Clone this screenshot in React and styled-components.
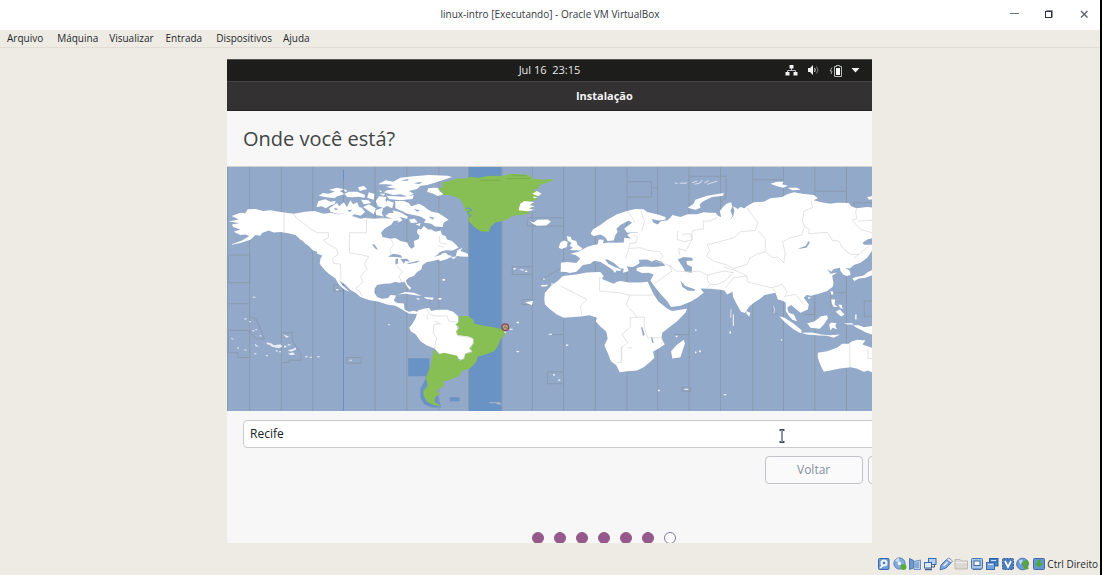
import React from "react";
import styled, { createGlobalStyle } from "styled-components";

const GlobalStyle = createGlobalStyle`
  *, *::before, *::after { box-sizing: border-box; }
  body { margin: 0; background: #eeebe5; }
  button, input { font: inherit; margin: 0; }
`;

const uiFont = `"Open Sans", "Noto Sans", sans-serif`;

/* ---------- host window ---------- */

const HostWindow = styled.div`
  min-height: 100vh;
  display: flex;
  flex-direction: column;
  background: #eeebe5;
  border-right: 2px solid #000;
  font-family: ${uiFont};
  font-size: 10px;
  color: #25282c;
`;

const TitleBar = styled.header`
  display: grid;
  grid-template-columns: 1fr auto 1fr;
  align-items: center;
  height: 30px;
  padding-bottom: 2px;
  background: #fff;
`;

const WindowTitle = styled.h1`
  grid-column: 2;
  margin: 0;
  font-size: 10px;
  font-weight: 400;
  line-height: 14px;
  color: #33373d;
`;

const WindowControls = styled.div`
  display: flex;
  justify-content: flex-end;
  gap: 15px;
  padding-right: 6px;
`;

const ControlButton = styled.button`
  display: grid;
  place-items: center;
  width: 20px;
  height: 20px;
  padding: 0;
  border: 0;
  background: none;
`;

const MenuBar = styled.nav`
  display: flex;
  align-items: center;
  height: 18px;
  padding: 0 7px 1px;
  border-bottom: 1px solid #e3ddd6;
`;

const MenuItem = styled.button`
  padding: 0;
  margin-right: ${(p) => p.$gap}px;
  border: 0;
  background: none;
  color: inherit;
  line-height: 14px;
`;

const Workspace = styled.main`
  flex: 1;
  display: grid;
  grid-template-columns: 227fr 645fr 228fr;
  padding-top: 11px;
`;

const StatusBar = styled.footer`
  display: flex;
  justify-content: flex-end;
  align-items: center;
  gap: 1px;
  height: 32px;
  padding: 10px 2px 0 0;
  line-height: 14px;
`;

const StatusIcons = styled.div`
  display: grid;
  grid-template-columns: repeat(11, 1fr);
  justify-items: center;
  width: 170px;
`;

/* ---------- guest display ---------- */

const GuestDisplay = styled.section`
  grid-column: 2;
  min-width: 0;
  height: 484px;
  overflow: hidden;
  background: #f7f7f7;
  color: #e8e8e8;
`;

const TopBar = styled.div`
  display: grid;
  grid-template-columns: 1fr auto 1fr;
  align-items: center;
  height: 22px;
  padding: 0 12px 1px 0;
  background: #1d1d1c;
  border-top: 1px solid #55534f;
`;

const Clock = styled.time`
  grid-column: 2;
  padding-left: 12px;
  font-size: 11px;
  line-height: 16px;
  white-space: pre;
`;

const Indicators = styled.div`
  display: flex;
  align-items: center;
  justify-content: flex-end;
  gap: 9px;
`;

const Installer = styled.div`
  width: 117%;
  color: #3d3d3d;
`;

const InstallerTitle = styled.div`
  height: 30px;
  border-top: 1px solid #454343;
  border-bottom: 1px solid #232222;
  background: #333131;
  color: #f4f4f4;
  font-size: 11px;
  font-weight: 700;
  line-height: 28px;
  text-align: center;
`;

const Heading = styled.h2`
  height: 56px;
  margin: 0;
  padding: 0 16px;
  border-bottom: 1px solid #d0d0cf;
  font-size: 20px;
  font-weight: 400;
  line-height: 55px;
  color: #434545;
`;

const MapFrame = styled.div`
  height: 244px;
  overflow: hidden;
  svg { display: block; width: 100%; height: 100%; }
`;

const Form = styled.form`
  padding: 9px 16px 0;
`;

const CityInput = styled.input`
  display: block;
  width: 100%;
  height: 28px;
  padding: 0 6px 2px;
  border: 1px solid #cbcbcd;
  border-radius: 4px;
  background: #fff;
  color: #202224;
  font-size: 12px;
  outline: none;
`;

const Actions = styled.div`
  display: flex;
  justify-content: flex-end;
  gap: 5px;
  padding-top: 8px;
`;

const ActionButton = styled.button`
  width: 98px;
  height: 28px;
  padding: 0 0 2px;
  border: 1px solid #c3c4c9;
  border-radius: 4px;
  background: #fafafa;
  color: #8590a0;
  font-size: 12px;
`;

const Progress = styled.div`
  display: flex;
  justify-content: center;
  gap: 10px;
  padding-top: 48px;
`;

const Dot = styled.span`
  width: 12px;
  height: 12px;
  border: 1px solid ${(p) => (p.$done ? "#955a8b" : "#847696")};
  border-radius: 50%;
  background: ${(p) => (p.$done ? "#955a8b" : "#fff")};
`;

const PointerLayer = styled.div`
  position: relative;
  svg { position: absolute; right: 180px; top: 9px; }
`;

/* ---------- map ---------- */

const zoneLines = [2, 68, 163, 257, 444, 539, 635, 724, 824, 915, 1009, 1104, 1199, 1291, 1385, 1479, 1576, 1668, 1762, 1857];

const WorldMap = () => (
  <svg viewBox="0 18 2262 733" preserveAspectRatio="xMinYMin slice" role="img" aria-label="Mapa de fusos horários">
    <rect y="0" width="2262" height="760" fill="#93a9c9" />
    <g fill="#6992c5">
      <path d="M724 18H824V752H724Z" />
      <path d="M543 591H607V645H543ZM668 708H697V720H668Z" />
      <path d="M605 620L590 665L580 680L579 710L592 730L615 739H642L630 690Z" />
    </g>
    <g fill="none" stroke="#8b9bae" strokeWidth="3">
      {zoneLines.map((x) => <path key={x} d={`M${x} 18V752`} />)}
      <path d="M4 282H68V365H4ZM4 428H68V465L88 475L112 533H88L62 507H4V575H32V589H68M166 515H196V540L222 578V597H186V604H163M358 589H402V606H358ZM320 372H345V390H320Z" />
      <path d="M855 317H915M855 317V340H915M885 415H915M885 415V430H915M960 632H1009M960 632V668H1009M900 175V195H1009V170H900M940 357L1005 318M962 520H1009" />
      <path d="M1199 62H1272V108H1199M1291 80H1275M1385 46H1496V108L1479 125M1576 56H1668M1762 91H1857M1880 137V125H1935M1340 520H1385M1363 680H1390V690H1363ZM1636 435V458H1650M1762 425V460H1725M1857 395H1810V440M1935 420H1910V465H1935" />
    </g>
    <path d="M349 27V752" stroke="#4d83c5" strokeWidth="2" />
    <path d="M349 58V340" stroke="#8b9bae" strokeWidth="3" />

    {/* North America */}
    <g fill="#fff">
      <path d="M14 165L40 155L55 157L62 145L85 144L108 150L130 148L165 154L200 158L235 152L262 150L290 158L312 155L330 160L350 158L385 168L400 173L418 170L440 174L465 170L490 173L500 165L508 172L518 168L526 178L512 184L505 192L490 192L472 203L462 214L466 228L490 233L505 231L520 240L540 244L546 257L553 263L562 257L560 240L575 234L577 224L569 214L572 204L582 205L590 195L603 205L612 205L625 212L640 208L645 222L655 225L660 235L674 240L686 250L694 260L676 268L655 268L636 274L648 277L655 272L662 282L676 285L660 294L640 300L632 295L618 300L600 303L586 312L582 325L570 333L560 345L545 350L536 358L541 370L552 381L548 386L540 377L532 362L515 365L505 362L490 367L470 368L450 372L443 382L442 395L450 408L465 413L483 411L490 402L507 403L500 418L510 426L530 427L532 445L545 452L560 449L580 455L565 459L545 457L525 445L505 434L480 430L455 422L425 417L400 408L385 395L370 387L355 371L342 362L336 358L345 372L360 385L367 393L350 384L335 370L325 352L305 338L290 324L278 308L280 293L287 281L270 272L258 268L245 255L232 244L222 236L205 222L180 216L160 213L140 214L125 208L105 216L100 224L85 222L70 236L40 246L8 252L45 238L67 225L55 220L40 222L20 212L40 205L18 198L15 190L38 186L5 181L35 175Z" />
      <path d="M225 232L238 240L248 255L235 248ZM270 270L288 276L286 284L270 277ZM208 220L220 226L222 238Z" />
      <path d="M268 138L274 120L295 115L310 122L326 120L322 130L312 132L296 142L284 136ZM275 104L288 96L302 98L312 96L330 88L345 94L352 100L330 106L322 112L310 110L293 108ZM306 86L330 80L350 85L335 92L318 90ZM350 84L362 90L354 93ZM352 98L366 92L390 92L414 102L412 110L394 107L378 109L360 108ZM392 79L410 75L420 84L398 90ZM306 142L330 126L336 136L350 124L360 138L370 118L378 130L390 124L396 138L404 140L414 153L400 164L382 160L370 168L350 158L330 158L310 152Z" />
      <path d="M425 94L442 99L440 116L420 110ZM402 116L424 118L432 126L410 130ZM408 138L425 130L446 142L440 160L425 150ZM445 148L468 140L464 158L470 166L447 162ZM446 121L455 106L478 108L474 118L486 130L470 141L452 136Z" />
      <path d="M453 70L475 58L498 62L520 50L560 46L605 42L660 44L675 48L650 56L620 66L600 72L580 74L570 84L545 90L560 98L540 106L520 100L498 102L470 94L480 88L510 84L476 78L500 72L478 70ZM455 88L465 90L460 94ZM478 104L530 107L560 102L556 114L520 118L486 114ZM456 98L474 98L470 104Z" />
      <path d="M480 118L500 125L495 142L478 134ZM504 120L530 120L545 126L552 136L575 128L590 136L600 144L614 152L634 156L650 166L664 176L650 184L646 198L624 196L612 188L590 184L596 176L580 166L560 162L540 158L524 150L505 142ZM474 165L486 156L500 155L496 148L520 154L542 166L540 174L518 168L500 176ZM545 176L562 172L572 184L552 186ZM566 190L580 186L578 195Z" />
      <path d="M603 82L622 80L640 82L636 90L650 100L632 105L618 98L600 92Z" />
      <path d="M690 268L705 260L700 270L722 278L723 287L700 286L686 284ZM670 290L690 285L680 294ZM512 400L535 393L560 395L585 405L560 402L535 398ZM590 408L620 410L616 416L598 414ZM567 411L580 413L572 416ZM634 411L644 411L642 415H634ZM648 354H653V358H648Z" />
    </g>
    <g fill="#93a9c9">
      <path d="M482 287L498 278L520 282L526 290L508 288ZM505 294L513 292L512 308L505 310ZM520 294L540 293L548 302L535 300L530 308ZM538 307L560 302L578 298L570 304L545 309ZM434 250L442 250L453 266L446 264ZM490 195L500 180L515 178L508 190ZM636 274L655 268L672 270L660 276L648 274L640 282L620 288L632 280Z" />
      <path d="M520 58L546 54L540 60ZM560 66L586 62L576 70ZM604 166L622 170L616 175ZM560 144L578 148L570 152ZM320 140L334 144L326 148ZM360 148L376 146L368 153Z" />
    </g>
    <path d="M171 153V214M200 158L208 172L225 183L245 200L270 215H304V230L288 237L302 248L328 263L333 280L316 293L320 307L340 309L342 358M418 172V215H367V276L400 280L425 287L412 308L420 324L400 345L408 362L385 382L398 392L405 406M418 172H495M490 233L500 250L488 265L492 282M508 312L526 333L515 345L524 362M636 225L638 245L660 250M632 254L650 258" fill="none" stroke="#d5d5d7" strokeWidth="2" />

    {/* Pacific islands */}
    <g fill="#e9edf4">
      <path d="M78 407H85V410H78ZM52 471H58V475H52ZM66 480H72V483H66ZM76 507H82V510H76ZM85 504H90V507H85ZM98 522H103V526H98ZM12 529L22 536L14 534ZM30 559H36V562H30ZM52 565H58V568H52ZM83 548L95 556L86 556ZM81 576H88V579H81ZM116 582H123V585H116ZM168 519L186 527L178 530ZM119 543L134 547L140 552L160 549L166 556L156 561L134 557L128 551L119 549ZM171 554H178V559H171ZM182 549H190V553H182ZM181 567L195 564L207 559V565L192 572ZM182 578L198 573L204 580L192 582ZM146 567H152V571H146ZM156 570H162V573H156ZM234 585H242V588H234ZM248 587H255V590H248ZM270 585H278V588H270ZM367 596H374V599H367ZM327 384H334V388H327ZM483 489H489V492H483Z" />
    </g>

    {/* South America */}
    <path d="M572 448L590 443L606 440L612 450L630 446L660 446L678 452L694 466L693 482L690 500L740 535L739 570L710 598L690 592L640 582L622 562L598 552L580 540L566 520L551 510L546 500L556 488L566 470Z" fill="#fff" />
    <path d="M693 466L723 464L740 478V487L770 494L800 498L824 504L836 516L820 535L812 555L800 570L775 580L752 586L746 604L728 622L704 630L695 645L668 656L648 662L650 674L626 690L640 696L624 708L622 722L640 734L622 733L600 722L590 705L588 690L602 672L596 650L610 615L616 582L622 562L632 580L650 575L690 584L696 598L710 592L714 577L735 570L726 562L738 546V532L720 525L690 522L686 510L696 498L685 490L697 480Z" fill="#87bf55" />
    <path d="M598 443L606 460L630 465L660 464L665 480L690 483M600 460V475M622 480L640 488L620 490L618 515L628 530L624 550L622 562M684 490L695 498L688 512L692 524L728 528L738 532V548L728 563L735 572L714 578L710 593L697 598" fill="none" stroke="#d5d5d7" strokeWidth="2" />
    <path d="M786 723H818L824 730H810L806 726H786Z" fill="#a9b6ca" />
    <path d="M608 413V436L630 443" fill="none" stroke="#8b9bae" strokeWidth="2" />

    {/* Greenland and the Atlantic */}
    <g transform="translate(519 0)">
      <path d="M112 84L130 74L122 65L150 60L165 53L195 52L210 48L238 50L262 45L310 44L330 38L382 41L402 54L432 56L458 53L456 60L434 67L420 70L416 80L400 88L414 96L410 116L388 122L396 140L384 150L386 158L358 162L336 165L325 173L300 181L284 185L272 196L266 212L242 211L220 196L205 178L202 160L194 148L190 132L180 115L166 108L148 102L130 102L124 90Z" fill="#87bf55" />
      <path d="M196 142L208 142L214 148L202 152L204 160L212 163L206 168" fill="none" stroke="#6992c5" strokeWidth="3" />
      <path d="M240 58H300M320 53L390 52M335 42L380 44" stroke="#79ad4e" strokeWidth="3" />
      <g fill="#fff">
        <path d="M355 148L360 128L372 120L402 123L388 132L404 136L386 142L402 147L382 151ZM396 98L410 90L424 98L414 105L404 102ZM400 106L412 110L400 112ZM388 180L400 184L412 176L442 175L452 182L438 193L410 194L398 188Z" />
        <path d="M500 225L512 228L514 236L528 240L532 252L547 262L540 268L508 267L518 260L508 254L514 246L502 238ZM475 260L480 245L490 238L502 242L500 258L484 264Z" />
        <path d="M376 423L398 420L395 432L382 428ZM422 372L444 371L438 376H424ZM340 321H346V325H340ZM356 324L372 326L368 329ZM374 329H381V333H374ZM428 352H434V355H428ZM349 482H356V486H349ZM328 503H337V506H328ZM347 569L358 570L352 574ZM497 550H504V554H497ZM445 518H455V521H445ZM458 639H464V643H458ZM474 655H480V659H474ZM452 367H460V370H452ZM127 354H134V358H127Z" />
      </g>
      <circle cx="315" cy="498" r="10" fill="#c8a090" stroke="#8c4659" strokeWidth="4" />
      <path d="M315 490V498M308 503Q315 495 322 503" fill="none" stroke="#6e8a3e" strokeWidth="3" />
      <path d="M310 511L315 518L320 511Z" fill="#e9ded7" />
    </g>

    {/* Europe, Africa, Asia and Oceania */}
    <g transform="translate(1119 0)">
      <g fill="#fff">
        <path d="M-28 216L-22 205L0 192L20 177L50 160L80 150L105 144L130 145L140 153L170 160L195 168L196 175L175 178L155 174L158 184L172 190L182 180L200 178L210 170L216 162L240 168L262 160L290 160L310 154L325 155L345 155L354 165L362 168L358 150L368 138L378 128L392 124L396 138L390 148L396 165L388 176L398 166L402 150L398 136L412 144L420 138L432 142L440 135L460 124L490 122L510 112L545 108L560 100L580 94L605 98L640 102L652 112L640 118L662 124L690 128L710 125L745 126L752 136L768 142L800 138L820 140V232L800 242L790 250L815 250L814 270L800 290L780 305L760 312L748 322L735 320L748 330L750 342L738 345L728 340L720 330L718 320L700 324L692 332L680 324L690 338L710 334L695 344L699 368L696 378L680 390L655 398L632 404L618 402L610 410L625 430L622 445L600 455L588 445L572 432L560 440L565 455L580 460L590 480L576 476L565 464L556 450L556 425L545 418L532 415L525 395L510 398L492 402L480 412L460 425L445 438L434 456L422 452L410 432L398 408L396 392L380 400L372 388L360 386L330 383L300 382L310 395L290 410L270 422L240 434L212 438L200 420L180 398L158 370L150 358L160 340L145 335L125 336L108 328L110 320L130 316L160 318L195 314L185 302L165 296L155 302L140 295L115 296L118 306L105 315L98 318L80 316L85 330L68 335L70 322L60 322L40 305L22 295L14 295L24 308L40 316L62 325L60 330L48 328L44 336L36 325L20 315L0 302L-20 300L-30 308L-52 312L-72 332L-92 336L-102 333L-119 332L-118 305L-100 303L-72 306L-60 292L-74 282L-90 278L-65 272L-40 258L-20 252L0 248L25 244L48 245L70 244L72 230L92 232L80 222L90 216L110 214L124 208L122 212L80 215L72 202L95 185L85 178L60 192L48 204L52 212L45 222L40 238L22 240L14 228L0 220L-18 225L-26 222Z" />
        <path d="M-8 252L-5 235L10 236L8 250Z" />
        <path d="M-112 345L-72 340L-40 334L0 333L10 345L5 354L40 368L50 362L62 360L85 364L120 364L142 362L160 400L175 422L200 442L215 450L260 443L255 455L230 480L205 500L186 515L183 530L193 550L178 560L158 572L162 590L150 602L130 618L110 628L80 630L58 633L48 612L32 600L22 575L12 553L22 532L18 512L0 496L-14 480L-10 470L-32 462L-60 466L-90 468L-110 470L-130 460L-150 445L-166 430L-168 412L-166 395L-148 375L-128 360Z" />
        <path d="M250 536L254 546L240 588L216 592L212 570L228 552ZM438 450L450 456L446 466L438 458Z" />
        <path d="M262 140L280 128L285 116L320 104L370 96L368 104L335 108L310 120L298 130L300 140L285 146ZM510 68L530 62L550 62L545 70L562 74L548 80L530 76ZM562 80L590 80L600 86L575 88ZM800 108L820 105V114L805 116Z" />
        <path d="M536 465L552 470L580 488L604 508L600 516L580 505L555 485ZM600 515L635 514L662 520L690 522L718 520L700 530L680 524L660 523L620 520ZM620 486L640 482L662 465L680 462L682 472L670 490L658 503L630 500ZM686 490L692 484L708 486L704 494L710 504L696 500L690 508ZM692 415L704 415L702 430L712 438L700 438L694 428ZM705 452L718 445L732 460L722 466ZM714 430L724 432L726 444L718 440ZM690 390L698 392L698 400L692 400ZM622 408L632 410L624 414ZM755 352L766 348L788 344L800 334L816 326V342L795 350L775 352L762 360ZM730 486H755L760 490H740ZM758 492L775 492L790 498L820 494V522L798 515L785 508L768 500ZM764 460H768V475H764Z" />
        <path d="M652 575L680 570L712 558L725 548L745 548L752 542L770 536L795 538L785 550L820 562V636L802 628L790 632L768 622L750 618L718 622L700 626L670 632L660 612L652 590Z" />
        <path d="M391 442L393 446L392 470H390ZM397 460H400V494H397ZM387 511H392V517H387ZM284 505H288V509H284ZM284 571H288V576H284ZM296 568H301V573H296ZM226 524H231V528H226ZM252 683H264V686H252ZM370 699H378V702H370ZM173 686H178V690H173ZM541 534H545V538H541Z" />
      </g>
      <path d="M223 65L232 68M238 67L255 66M260 63L254 69M275 65L290 60M282 70L298 66L306 58M312 66L325 59M320 70L334 65L350 61M519 436L522 445L520 458" fill="none" stroke="#d3dbe8" strokeWidth="3" />
      <g fill="#93a9c9">
        <path d="M232 295L250 288L275 290L278 298L258 300L260 310L275 318L274 335L255 332L246 316ZM240 358L255 375L285 385L280 390L262 388L246 378ZM600 260L615 255L625 240L628 245L618 260L592 264ZM122 498H126L133 520L128 525ZM152 528H156L160 545H155ZM786 245L800 235L820 230V250H790Z" />
      </g>
      <path d="M80 150L95 168L104 185M122 150L132 182L125 210M100 222L112 230L106 245L88 248L84 270L75 292M88 262L120 260L140 268L178 272L188 285L180 295M232 210L230 235L252 242L275 236L270 218L245 220M275 236L256 270L235 262L238 282M275 210L310 202L308 180L330 180L352 168M275 236V210M320 250L335 248L400 230L420 212L465 208L472 185L455 162L440 140M320 250L328 268L318 285L340 300L380 312L400 322L412 318L440 310L448 292L468 280L494 272L495 235L475 210M494 272L518 290L532 288L550 305L554 275L546 242L570 230L604 222L612 195L606 180L610 150L636 140L632 120M612 195L626 205L625 218L680 214L696 238L715 240L728 262L750 280L775 280L810 250M775 280L760 292M755 178L770 172L765 155L768 142M772 180L815 178M755 178L780 205L815 215M165 300L205 312L228 330L270 332L295 330L322 342L320 355L330 372L318 382M205 312L215 330L185 350L160 370M322 342L370 330L400 335L372 360L350 370L330 370M370 318L410 330L440 345L400 350L375 380M440 345V362L490 375L515 380M515 380L545 370L560 392L550 412M515 380L528 395M555 405L585 400L610 430M0 390L60 395L88 402H160M88 402L78 430L110 468L90 470V498L65 520L82 545L62 560L65 600M110 468H132V500L142 530H185V550M82 560H95M65 558L62 605M50 604H64M-118 375L-40 415L-60 435L-55 462M-2 348V390M748 548V618M802 562V592H820" fill="none" stroke="#d5d5d7" strokeWidth="2" />
    </g>
  </svg>
);

/* ---------- status icons ---------- */

const Icon = ({ size = 14, width, children, label }) => (
  <svg width={width || size} height={size} viewBox={`0 0 ${width || size} ${size}`} role="img" aria-label={label} fill="none">
    {children}
  </svg>
);

const DiskIcon = () => (
  <Icon label="Discos">
    <rect x="1.5" y="1.5" width="10.5" height="11" rx="1" fill="#6d9bd6" stroke="#3c69a6" />
    <circle cx="7" cy="6" r="3.600" fill="#e6effa" />
    <circle cx="7" cy="6" r="1.300" fill="#4c7dbd" />
    <path d="M3 11L6.500 8" stroke="#fff" strokeWidth="1.600" />
  </Icon>
);
const OpticalIcon = () => (
  <Icon label="Disco óptico">
    <circle cx="6.500" cy="6.500" r="5.600" fill="#83abdc" stroke="#5780b7" />
    <path d="M6.500 6.500L2 3.500A5.500 5.500 0 0 1 6 1Z" fill="#c9dcf1" />
    <circle cx="6.500" cy="6.500" r="1.700" fill="#eef4fb" />
    <circle cx="10.500" cy="10" r="3" fill="#58ad38" />
  </Icon>
);
const AudioIcon = () => (
  <Icon label="Áudio">
    <path d="M1.500 1.500L5.500 3.500V11L1.500 12.500Z" fill="#6c99d2" stroke="#5079b1" />
    <path d="M6 4.500L12.500 3V12.500H6Z" fill="#b9cfeb" stroke="#6b8fc0" />
    <path d="M8 5.500V11M10 5V11" stroke="#5d86bd" />
  </Icon>
);
const NetworkIcon = () => (
  <Icon label="Rede">
    <rect x="5.500" y="1.500" width="7.500" height="6" fill="#b5cfee" stroke="#3e6caa" />
    <path d="M11.500 7.500V10H8" stroke="#44536a" />
    <rect x="1.500" y="5.500" width="7" height="5.500" fill="#dce9f8" stroke="#3e6caa" />
    <path d="M2 12.500H9" stroke="#465f86" strokeWidth="1.500" />
  </Icon>
);
const UsbIcon = () => (
  <Icon label="USB">
    <path d="M1 13L2 8L7.500 2.500L12 6L7 11Z" fill="#7ba6df" stroke="#4777b5" />
    <path d="M7.500 2.500L10 1L13.500 4L12 6Z" fill="#e7eef6" stroke="#7590b4" />
    <path d="M4.500 9L8.500 5" stroke="#e9f2fd" strokeWidth="1.500" />
  </Icon>
);
const FolderIcon = () => (
  <Icon label="Pastas compartilhadas">
    <path d="M1 2.500H6L7.500 4H13.500V12H1Z" fill="#dcd9d5" stroke="#bcb9b5" />
    <path d="M1.500 5.500H13" stroke="#f2f0ed" />
  </Icon>
);
const DisplayIcon = () => (
  <Icon label="Monitor">
    <rect x="1.500" y="1.500" width="11" height="10.500" rx="1" fill="#a9c5e8" stroke="#4b78b4" />
    <rect x="4" y="4" width="6" height="4.500" fill="#f1f7fd" stroke="#41699e" />
    <path d="M3 12.500H11" stroke="#50739f" />
  </Icon>
);
const RecordIcon = () => (
  <Icon label="Gravação">
    <rect x="4.500" y="1.500" width="8.500" height="7.500" fill="#457bc0" stroke="#2f619f" />
    <rect x="1.500" y="5.500" width="8" height="7" fill="#77a5de" stroke="#3b6ba9" />
    <path d="M3 7.500H8M6 3.500H11" stroke="#d3e4f8" />
  </Icon>
);
const CpuIcon = () => (
  <Icon label="Processador">
    <rect x="1.500" y="1.500" width="11" height="11" rx="1" fill="#4a7cbd" stroke="#2f5d9a" strokeDasharray="2 1" />
    <path d="M4 4L7 10L10 4" stroke="#fff" strokeWidth="1.700" />
  </Icon>
);
const MouseIcon = () => (
  <Icon label="Integração do mouse">
    <circle cx="6.500" cy="7" r="5.800" fill="#6e9bd3" stroke="#4773ac" />
    <path d="M3 3.500L6 2.500L7 5L4 7.500Z" fill="#c0d8f2" />
    <path d="M6 5.500L11 3L13 6.500L10.500 8L12.500 11.500L9.500 12.500L7.500 9.500Z" fill="#58a73b" stroke="#4c9636" strokeWidth="0.500" />
  </Icon>
);
const KeyboardIcon = () => (
  <Icon label="Teclado">
    <rect x="1.500" y="1.500" width="11" height="11" rx="1" fill="#6995cf" stroke="#3e6ba6" />
    <path d="M5.500 3H8.500V6.500H11L7 10.500L3 6.500H5.500Z" fill="#4da92e" />
  </Icon>
);

const statusIcons = [DiskIcon, OpticalIcon, AudioIcon, NetworkIcon, UsbIcon, FolderIcon, DisplayIcon, RecordIcon, CpuIcon, MouseIcon, KeyboardIcon];

const menu = [
  ["Arquivo", 14],
  ["Máquina", 11],
  ["Visualizar", 12],
  ["Entrada", 14],
  ["Dispositivos", 11],
  ["Ajuda", 0],
];

export default function App() {
  return (
    <HostWindow>
      <GlobalStyle />
      <TitleBar>
        <WindowTitle>linux-intro [Executando] - Oracle VM VirtualBox</WindowTitle>
        <WindowControls>
          <ControlButton aria-label="Minimizar">
            <Icon size={10}><path d="M1 4.500H10" stroke="#6c7480" /></Icon>
          </ControlButton>
          <ControlButton aria-label="Restaurar">
            <Icon size={10}>
              <path d="M2.500 2V1.500H8.500V8H8" stroke="#8c939e" />
              <rect x="1.500" y="2.500" width="6" height="6" stroke="#2c3138" />
            </Icon>
          </ControlButton>
          <ControlButton aria-label="Fechar">
            <Icon size={10}><path d="M2 2L8.500 8.500M8.500 2L2 8.500" stroke="#56616f" strokeWidth="1.300" /></Icon>
          </ControlButton>
        </WindowControls>
      </TitleBar>
      <MenuBar>
        {menu.map(([text, gap]) => <MenuItem key={text} $gap={gap}>{text}</MenuItem>)}
      </MenuBar>

      <Workspace>
        <GuestDisplay>
          <TopBar>
            <Clock>Jul 16  23:15</Clock>
            <Indicators>
              <Icon size={12} width={13} label="Rede cabeada">
                <path d="M6.500 4V6.500M2.500 9V6.500H10.500V9" stroke="#b9bcc0" />
                <path d="M4.500 1H8.500V4.500H4.500ZM0.500 8H4.500V11.500H0.500ZM8.500 8H12.500V11.500H8.500Z" fill="#f2f2f2" />
              </Icon>
              <Icon size={12} width={13} label="Volume">
                <path d="M1 4H3L6 1V11L3 8H1Z" fill="#f2f2f2" />
                <path d="M7.500 4Q9 6 7.500 8" stroke="#e4e4e4" />
                <path d="M9.500 2.500Q12.500 6 9.500 9.500" stroke="#77797c" />
              </Icon>
              <Icon size={13} width={13} label="Bateria">
                <path d="M3 3.500L1 7H3L2 10" stroke="#a4a7ab" />
                <path d="M7.500 1V1.500H10.500V2.500H12.500V12.500H5.500V2.500H7.500V1.500" stroke="#b9bcc0" />
                <rect x="7" y="4" width="4" height="7" fill="#fff" />
              </Icon>
              <Icon size={8} width={9} label="Menu do sistema">
                <path d="M0.500 2H8.500L4.500 6.500Z" fill="#f2f2f2" />
              </Icon>
            </Indicators>
          </TopBar>

          <Installer>
            <InstallerTitle>Instalação</InstallerTitle>
            <Heading>Onde você está?</Heading>
            <MapFrame><WorldMap /></MapFrame>
            <Form onSubmit={(e) => e.preventDefault()}>
              <PointerLayer>
                <CityInput aria-label="Cidade" defaultValue="Recife" />
                <svg width="8" height="14" viewBox="0 0 8 14" aria-hidden="true">
                  <path d="M1.500 1H6.500M1.500 13H6.500" stroke="#3f4d5d" strokeWidth="2" />
                  <path d="M4 1V13" stroke="#8794a5" strokeWidth="2" />
                </svg>
              </PointerLayer>
              <Actions>
                <ActionButton type="button">Voltar</ActionButton>
                <ActionButton type="submit" aria-label="Continuar" />
              </Actions>
            </Form>
            <Progress>
              {[1, 2, 3, 4, 5, 6, 7].map((n) => <Dot key={n} $done={n < 7} />)}
            </Progress>
          </Installer>
        </GuestDisplay>
      </Workspace>

      <StatusBar>
        <StatusIcons>
          {statusIcons.map((StatusIcon, i) => <StatusIcon key={i} />)}
        </StatusIcons>
        <span>Ctrl Direito</span>
      </StatusBar>
    </HostWindow>
  );
}
